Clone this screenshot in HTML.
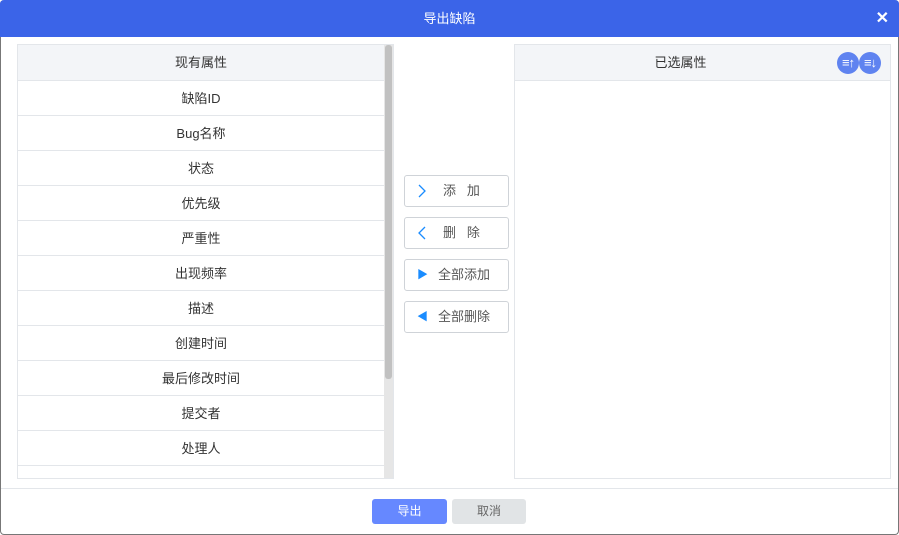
<!DOCTYPE html>
<html><head><meta charset="utf-8"><style>
*{box-sizing:border-box;margin:0;padding:0}
body{width:899px;height:535px;background:#fff;font-family:"Liberation Sans","Noto Sans CJK SC",sans-serif;position:relative;overflow:hidden;font-size:13px;color:#333}
.frame{position:absolute;left:0;top:0;width:899px;height:535px;border:1px solid #777;border-top:none;border-radius:4px;z-index:5;pointer-events:none}
.hd{position:absolute;left:0;top:0;width:899px;height:37px;background:#3b64e8;color:#fff;text-align:center;line-height:37px;font-size:13px;border-radius:4px 4px 0 0;z-index:6}
.x{position:absolute;right:10px;top:0;font-size:16px;font-weight:bold}
.left{position:absolute;left:17px;top:44px;width:377px;height:435px;border:1px solid #e3e6ea;overflow:hidden}
.row{height:35px;border-bottom:1px solid #e3e6ea;text-align:center;line-height:35px;width:366px}
.th{background:#f3f5f8;height:36px;line-height:36px}
.sb{position:absolute;left:366px;top:0;width:10px;height:435px;background:#e6e6e6}
.th2{position:absolute;left:367px;top:0;width:7px;height:334px;background:#c1c1c1;border-radius:3px}
.right{position:absolute;left:514px;top:44px;width:377px;height:435px;border:1px solid #e3e6ea}
.right .th{border-bottom:1px solid #e3e6ea;text-align:center;width:auto;padding-right:44px}
.btn{position:absolute;left:404px;width:105px;height:32px;border:1px solid #cfd3d8;border-radius:3px;line-height:30px;color:#555;font-size:13px}
.btn span.i{position:absolute;left:12px;top:0;color:#1a8cff}
.btn span.t{position:absolute;left:33px}
.ic{position:absolute;top:7px;width:22px;height:22px;border-radius:50%;background:#5f83f0;color:#fff;font-size:13px;text-align:center;line-height:22px;font-weight:bold;letter-spacing:-1px}
.ft{position:absolute;left:0;top:488px;width:899px;border-top:1px solid #e3e6ea}
.b1{position:absolute;left:372px;top:499px;width:75px;height:25px;background:#6688ff;color:#fff;border-radius:3px;text-align:center;line-height:25px;font-size:12px}
.b2{position:absolute;left:452px;top:499px;width:74px;height:25px;background:#e1e4e6;color:#666;border-radius:3px;text-align:center;line-height:25px;font-size:12px}
</style></head><body>
<div class="frame"></div>
<div class="hd">导出缺陷<span class="x">✕</span></div>
<div class="left">
<div class="row th">现有属性</div>
<div class="row">缺陷ID</div>
<div class="row">Bug名称</div>
<div class="row">状态</div>
<div class="row">优先级</div>
<div class="row">严重性</div>
<div class="row">出现频率</div>
<div class="row">描述</div>
<div class="row">创建时间</div>
<div class="row">最后修改时间</div>
<div class="row">提交者</div>
<div class="row">处理人</div>
<div class="row"></div>
<div class="sb"></div><div class="th2"></div>
</div>
<div class="btn" style="top:175px"><span class="i"><svg width="10" height="30" viewBox="0 0 10 30"><path d="M2 9 L8 15 L2 21" fill="none" stroke="#1a8cff" stroke-width="1.3"/></svg></span><span class="t" style="left:38px">添&nbsp;&nbsp;&nbsp;加</span></div>
<div class="btn" style="top:217px"><span class="i"><svg width="10" height="30" viewBox="0 0 10 30"><path d="M8 9 L2 15 L8 21" fill="none" stroke="#1a8cff" stroke-width="1.3"/></svg></span><span class="t" style="left:38px">删&nbsp;&nbsp;&nbsp;除</span></div>
<div class="btn" style="top:259px"><span class="i" style="font-size:11px">▶</span><span class="t">全部添加</span></div>
<div class="btn" style="top:301px"><span class="i" style="font-size:11px">◀</span><span class="t">全部删除</span></div>
<div class="right">
<div class="row th">已选属性</div>
<div class="ic" style="left:322px">≡↑</div><div class="ic" style="left:344px">≡↓</div>
</div>
<div class="ft"></div>
<div class="b1">导出</div>
<div class="b2">取消</div>
</body></html>
